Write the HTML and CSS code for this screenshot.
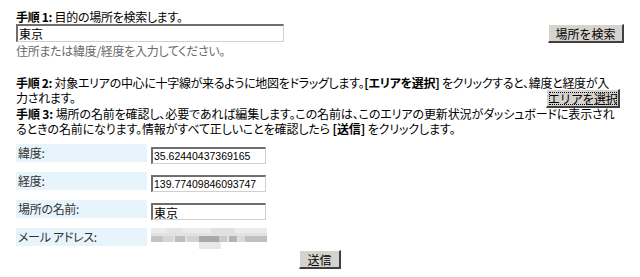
FILE: index.html
```html
<!DOCTYPE html>
<html lang="ja">
<head>
<meta charset="utf-8">
<link rel="stylesheet" href="styles.css">
</head>
<body>
<div class="page">
  <section class="step step1">
    <div class="line"><b>手順 1:</b> 目的の場所を検索します。</div>
    <div class="search-row">
      <input class="field search" type="text" value="東京">
      <button class="btn">場所を検索</button>
    </div>
    <div class="hint">住所または緯度/経度を入力してください。</div>
  </section>

  <section class="step step2">
    <p class="para"><b>手順 2:</b> 対象エリアの中心に十字線が来るように地図をドラッグします。<b>[エリアを選択]</b> をクリックすると、緯度と経度が入<br>力されます。<button class="btn btn-focus">エリアを選択</button></p>
  </section>

  <section class="step step3">
    <p class="para"><b>手順 3:</b> 場所の名前を確認し、必要であれば編集します。この名前は、このエリアの更新状況がダッシュボードに表示され<br>るときの名前になります。情報がすべて正しいことを確認したら <b>[送信]</b> をクリックします。</p>
  </section>

  <div class="form">
    <div class="label">緯度:</div>
    <div class="cell"><input class="field num" type="text" value="35.62440437369165"></div>
    <div class="label">経度:</div>
    <div class="cell"><input class="field num" type="text" value="139.77409846093747"></div>
    <div class="label">場所の名前:</div>
    <div class="cell"><input class="field name" type="text" value="東京"></div>
    <div class="label">メール アドレス:</div>
    <div class="cell">
      <svg class="blur" width="116" height="22" viewBox="0 0 116 22">
        <rect x="0" y="0" width="116" height="5" fill="#ececec"/>
        <rect x="0" y="5" width="116" height="9" fill="#e2e2e2"/>
        <rect x="0" y="8" width="12" height="6" fill="#c4c4c4"/>
        <rect x="12" y="8" width="10" height="6" fill="#d6d6d6"/>
        <rect x="24" y="8" width="10" height="6" fill="#bebebe"/>
        <rect x="36" y="8" width="12" height="6" fill="#d2d2d2"/>
        <rect x="48" y="8" width="20" height="6" fill="#a8a8a8"/>
        <rect x="68" y="8" width="8" height="6" fill="#cacaca"/>
        <rect x="78" y="8" width="8" height="6" fill="#b4b4b4"/>
        <rect x="88" y="8" width="6" height="6" fill="#dadada"/>
        <rect x="94" y="8" width="22" height="6" fill="#c0c0c0"/>
        <rect x="16" y="0" width="16" height="5" fill="#e4e4e4"/>
        <rect x="60" y="0" width="24" height="5" fill="#e0e0e0"/>
        <rect x="48" y="14" width="22" height="7" fill="#e8e8e8"/>
      </svg>
    </div>
  </div>

  <div class="submit-row">
    <button class="btn btn-submit">送信</button>
  </div>
</div>
</body>
</html>
```

FILE: styles.css
```css
html, body {
  margin: 0;
  padding: 0;
  background: #ffffff;
}

body {
  font-family: "Noto Sans CJK JP", "Liberation Sans", sans-serif;
  font-size: 12px;
  line-height: 15px;
  color: #000000;
  font-feature-settings: "palt";
  letter-spacing: -0.3px;
}

.page {
  padding: 9px 16px 0 16px;
}

b {
  font-weight: bold;
}

.line {
  height: 15px;
}

.search-row {
  display: flex;
  justify-content: space-between;
  align-items: flex-start;
  height: 19px;
}

.field {
  box-sizing: border-box;
  margin: 0;
  padding: 0 1px;
  font-family: "Liberation Sans", "Noto Sans CJK JP", sans-serif;
  font-size: 10.5px;
  letter-spacing: 0;
  color: #000;
  background: #fff;
  border-style: solid;
  border-width: 2px 1px 1px 2px;
  border-color: #6e6e6e #d0d0d0 #d0d0d0 #6e6e6e;
  outline: none;
}

.search {
  width: 268px;
  height: 18px;
  font-family: "Noto Sans CJK JP", sans-serif;
  font-size: 12px;
}

.hint {
  color: #6a6a6a;
  height: 15px;
}

.btn {
  box-sizing: border-box;
  height: 19px;
  padding: 0;
  margin: 0;
  font-family: "Noto Sans CJK JP", sans-serif;
  font-size: 12px;
  line-height: 15px;
  font-feature-settings: normal;
  letter-spacing: 0;
  color: #000;
  white-space: nowrap;
  background: #d6d3ce;
  border-style: solid;
  border-width: 1px 2px 2px 1px;
  border-color: #ffffff #404040 #404040 #ffffff;
  width: 76px;
}

.btn-focus {
  float: right;
  width: 74px;
  margin: -1px 4px -4px 0;
  letter-spacing: -0.5px;
  outline: 1px dotted #000;
  outline-offset: -4px;
}

.para {
  margin: 0;
  white-space: nowrap;
}

.step2 {
  margin-top: 17px;
}

.step3 {
  padding-top: 1px;
  letter-spacing: -0.12px;
}

.form {
  display: grid;
  grid-template-columns: 131px 1fr;
  column-gap: 4px;
  row-gap: 10px;
  margin-top: 8px;
}

.label {
  background: #e8f4fc;
  height: 18px;
  line-height: 18px;
  padding-left: 2px;
  color: #333;
}

.cell {
  padding-top: 3px;
  height: 15px;
}

.num,
.name {
  width: 115px;
  height: 17px;
}

.name {
  font-family: "Noto Sans CJK JP", sans-serif;
  font-size: 12px;
}

.blur {
  display: block;
  margin-top: -3px;
}

.submit-row {
  display: flex;
  justify-content: center;
  margin-top: 4px;
}

.btn-submit {
  width: 42px;
}
```
